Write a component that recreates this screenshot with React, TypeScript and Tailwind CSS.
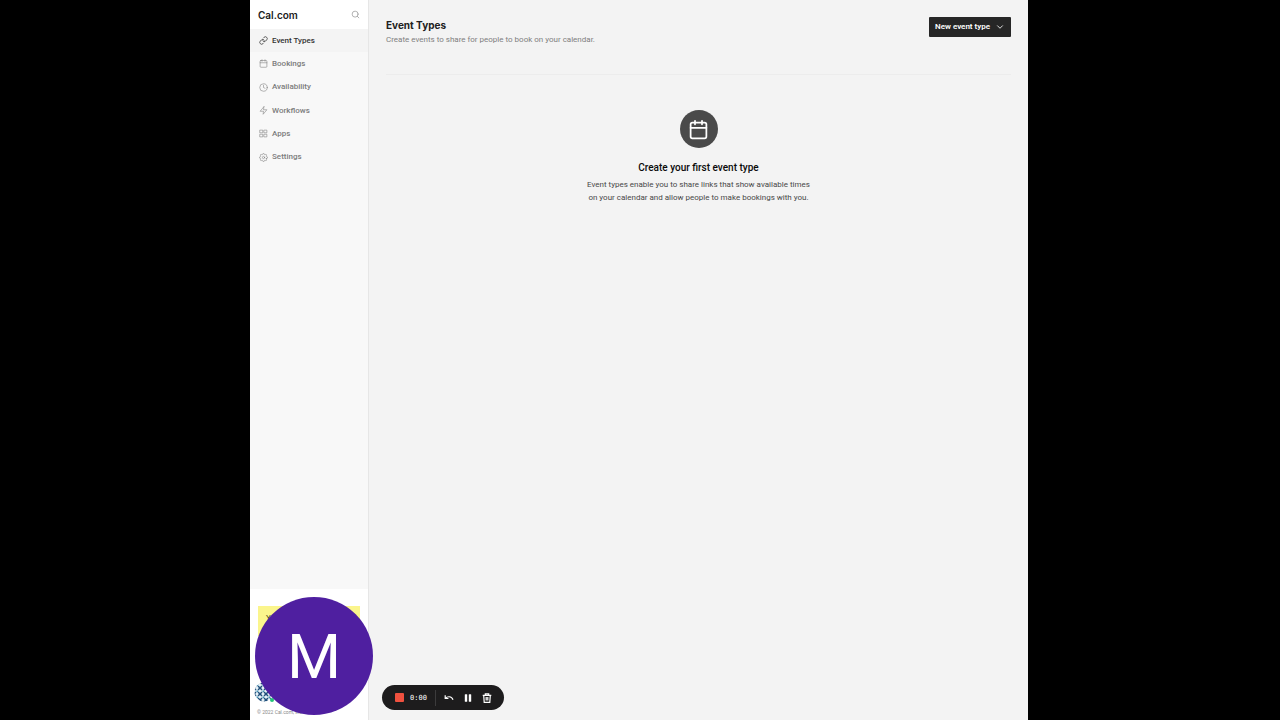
import type { IconType } from "react-icons";
import {
  FiCalendar,
  FiChevronDown,
  FiClock,
  FiGrid,
  FiLink,
  FiSearch,
  FiSettings,
  FiZap,
} from "react-icons/fi";

type NavItem = {
  label: string;
  icon: IconType;
  active?: boolean;
};

const navItems: NavItem[] = [
  { label: "Event Types", icon: FiLink, active: true },
  { label: "Bookings", icon: FiCalendar },
  { label: "Availability", icon: FiClock },
  { label: "Workflows", icon: FiZap },
  { label: "Apps", icon: FiGrid },
  { label: "Settings", icon: FiSettings },
];

function Sidebar() {
  return (
    <aside className="flex w-[119px] shrink-0 flex-col border-r border-[#e6e6e6] bg-[#f8f8f8]">
      <div className="flex h-[29px] items-center justify-between bg-white px-2">
        <a href="#" className="font-[Inter,sans-serif] text-[10px] font-semibold leading-4 text-[#202020]">
          Cal.com
        </a>
        <button type="button" aria-label="Search" className="text-[#9a9a9a]">
          <FiSearch size={9} strokeWidth={2} />
        </button>
      </div>

      <nav className="flex h-[140px] flex-col">
        {navItems.map(({ label, icon: Icon, active }) => (
          <a
            key={label}
            href="#"
            className={
              active
                ? "flex flex-1 items-center gap-1 bg-[#f4f4f4] pl-[9px] text-[8px] font-medium leading-3 text-[#333333]"
                : "flex flex-1 items-center gap-1 pl-[9px] text-[8px] font-medium leading-3 text-[#7c7c7c]"
            }
          >
            <Icon size={9} strokeWidth={active ? 2 : 1.5} />
            {label}
          </a>
        ))}
      </nav>

      <div className="mt-auto flex h-[131px] flex-col bg-white px-2 pt-[17px]">
        <div className="h-[30px] bg-[#fbf58c] pl-2 pt-2 text-[8px] leading-2 text-[#4a4520]">Your</div>
        <div className="relative mt-[46px] -ml-1 size-5">
          <UserPattern />
          <span className="absolute bottom-0 right-0 size-1 rounded-full bg-[#22c477]" />
        </div>
        <p className="mt-[6px] -ml-px whitespace-nowrap text-[5px] leading-2 text-[#8a8a8a]">© 2022 Cal.com, Inc.</p>
      </div>
    </aside>
  );
}

function UserPattern() {
  return (
    <svg viewBox="0 0 20 20" className="size-5">
      <defs>
        <clipPath id="avatar">
          <circle cx="10" cy="10" r="9.5" />
        </clipPath>
        <pattern id="tiles" width="6" height="6" patternUnits="userSpaceOnUse">
          <rect width="6" height="6" fill="#e4f0f6" />
          <path d="M0 0l2 2M4 2l2-2M2 4l-2 2M4 4l2 2" stroke="#21507c" strokeWidth="1.5" />
          <path d="M2.5 2.5h1.5v1.5H2.5z" fill="#3f8fb0" />
        </pattern>
      </defs>
      <g clipPath="url(#avatar)">
        <rect width="20" height="20" fill="url(#tiles)" />
      </g>
    </svg>
  );
}

function EmptyState() {
  return (
    <section className="mt-[35px] flex flex-col items-center text-center">
      <div className="flex size-[38px] items-center justify-center rounded-full bg-[#4a4a4a] text-white">
        <FiCalendar size={21} strokeWidth={2} />
      </div>
      <h2 className="mt-[14px] text-[10px] font-medium leading-3 text-[#0a0a0a]">Create your first event type</h2>
      <p className="mt-1 w-[228px] text-[8px] leading-[13px] text-[#484848]">
        Event types enable you to share links that show available times on your calendar and allow people to make
        bookings with you.
      </p>
    </section>
  );
}

function Recorder() {
  return (
    <>
      <div className="absolute bottom-[5px] left-[5px] flex size-[118px] items-center justify-center rounded-full bg-[#4f1fa0] pt-0.5 text-[62px] leading-none text-white">
        M
      </div>
      <div className="absolute bottom-[10px] left-[132px] flex h-[25px] w-[122px] items-center rounded-full bg-[#1d1c1d] pl-[13px] text-white">
        <button type="button" aria-label="Stop" className="size-[9px] rounded-[1px] bg-[#f0513f]" />
        <span className="ml-[6px] w-[25px] font-['DejaVu_Sans_Mono',monospace] text-[7px] leading-3">0:00</span>
        <span className="h-4 w-px bg-[#3c3b3c]" />
        <button type="button" aria-label="Restart" className="ml-2">
          <svg viewBox="0 0 10 10" className="size-[10px]" fill="none" stroke="currentColor" strokeWidth="1.2">
            <path d="M1.2 2.3v3.2h3.2M1.4 5.3C3.2 3.3 7.6 2.7 9 6.8" />
          </svg>
        </button>
        <button type="button" aria-label="Pause" className="ml-[9px]">
          <svg viewBox="0 0 10 10" className="size-[10px]" fill="currentColor">
            <rect x="1.8" y="1.2" width="2.4" height="7.6" rx=".5" />
            <rect x="5.8" y="1.2" width="2.4" height="7.6" rx=".5" />
          </svg>
        </button>
        <button type="button" aria-label="Delete" className="ml-[9px]">
          <svg viewBox="0 0 10 10" className="size-[10px]" fill="none" stroke="currentColor" strokeWidth="1.2">
            <path d="M.7 2.3h8.6M3.3 2.3V.8h3.4v1.5M1.7 2.3l.5 7h5.6l.5-7M4.2 4v3.6M5.8 4v3.6" />
          </svg>
        </button>
      </div>
    </>
  );
}

export default function App() {
  return (
    <div className="min-h-screen bg-black pl-[250px] pr-[252px] font-[Roboto,sans-serif]">
      <div className="relative flex min-h-screen bg-[#f3f3f3]">
        <Sidebar />
        <main className="flex-1 px-[17px] pt-[17px]">
          <header className="flex h-[58px] items-start justify-between border-b border-[#ececec]">
            <div>
              <h1 className="font-[Inter,sans-serif] text-[10px] font-bold leading-4 text-[#202020]">
                Event Types
              </h1>
              <p className="text-[8px] leading-[13px] text-[#808080]">
                Create events to share for people to book on your calendar.
              </p>
            </div>
            <button
              type="button"
              className="flex h-5 items-center gap-[5px] rounded-[1px] bg-[#262626] px-[6px] text-[8px] font-semibold text-white"
            >
              New event type
              <FiChevronDown size={10} strokeWidth={2} />
            </button>
          </header>
          <EmptyState />
        </main>
        <Recorder />
      </div>
    </div>
  );
}
